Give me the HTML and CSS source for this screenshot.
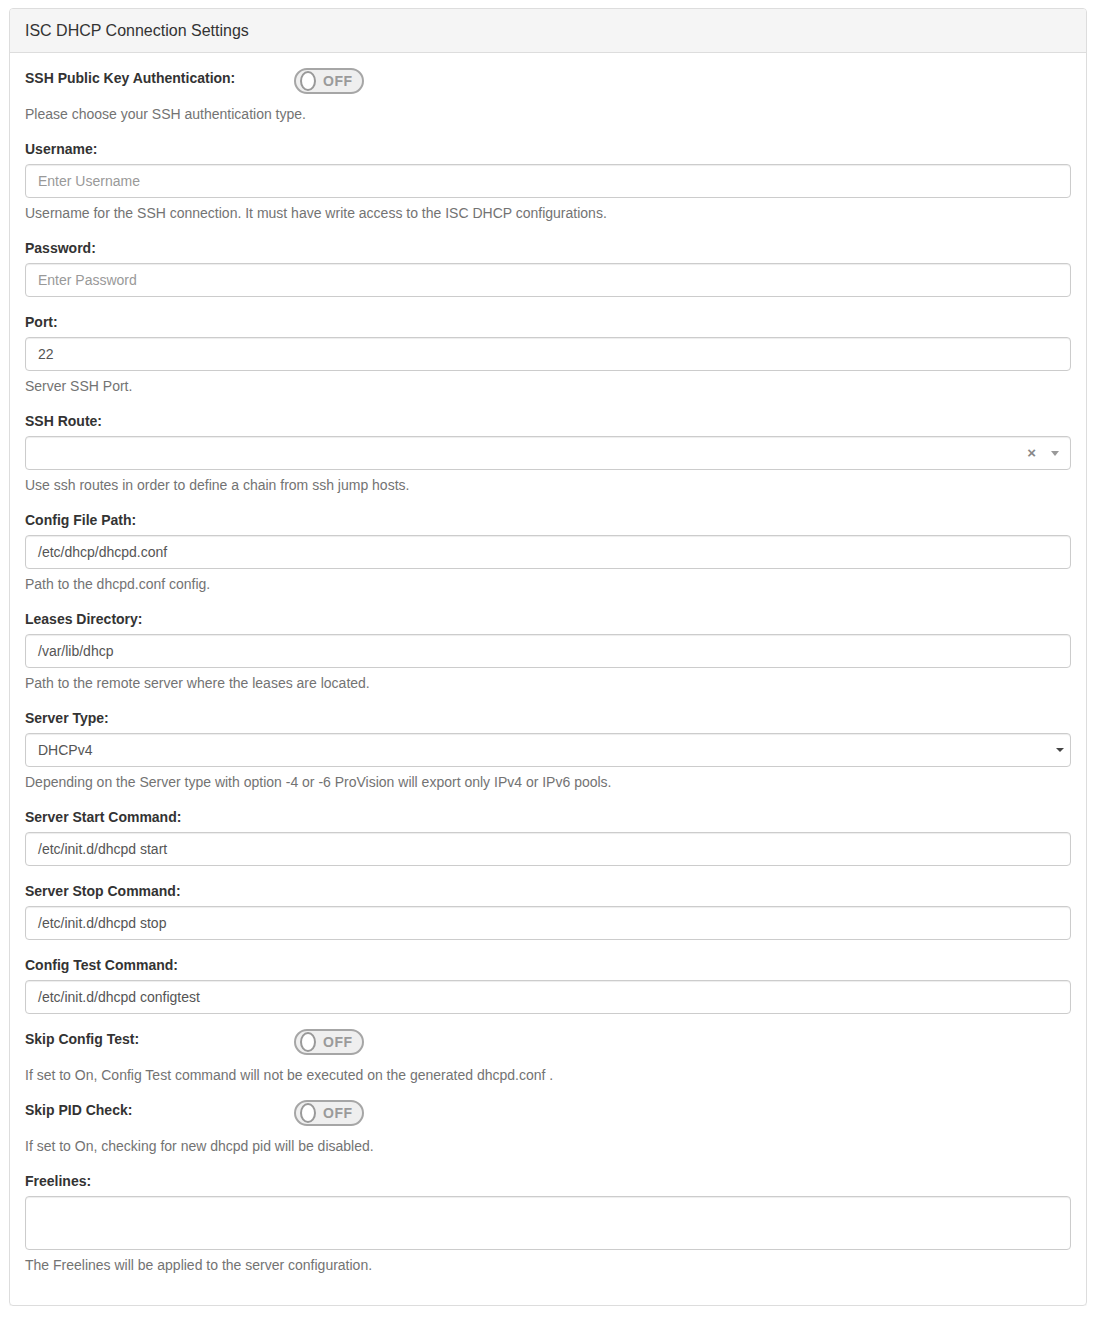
FILE: index.html
```html
<!DOCTYPE html>
<html lang="en">
<head>
	<meta charset="UTF-8">
	<title>ISC DHCP Connection Settings</title>
	<link rel="stylesheet" href="styles.css">
</head>
<body>
	<div class="panel">
		<div class="panel_heading">ISC DHCP Connection Settings</div>
		<div class="panel_body">

			<div class="form_group">
				<div class="switch_row">
					<label class="switch_label">SSH Public Key Authentication:</label>
					<span class="switch"><span class="knob"></span><span class="switch_text">OFF</span></span>
				</div>
				<p class="help">Please choose your SSH authentication type.</p>
			</div>

			<div class="form_group">
				<label>Username:</label>
				<div class="control placeholder">Enter Username</div>
				<p class="help">Username for the SSH connection. It must have write access to the ISC DHCP configurations.</p>
			</div>

			<div class="form_group">
				<label>Password:</label>
				<div class="control placeholder">Enter Password</div>
			</div>

			<div class="form_group">
				<label>Port:</label>
				<div class="control">22</div>
				<p class="help">Server SSH Port.</p>
			</div>

			<div class="form_group">
				<label>SSH Route:</label>
				<div class="control select2">
					<span class="select2_value"></span>
					<span class="select2_clear">&times;</span>
					<span class="select2_arrow"></span>
				</div>
				<p class="help">Use ssh routes in order to define a chain from ssh jump hosts.</p>
			</div>

			<div class="form_group">
				<label>Config File Path:</label>
				<div class="control">/etc/dhcp/dhcpd.conf</div>
				<p class="help">Path to the dhcpd.conf config.</p>
			</div>

			<div class="form_group">
				<label>Leases Directory:</label>
				<div class="control">/var/lib/dhcp</div>
				<p class="help">Path to the remote server where the leases are located.</p>
			</div>

			<div class="form_group">
				<label>Server Type:</label>
				<div class="control select">
					<span>DHCPv4</span>
					<span class="select_arrow"></span>
				</div>
				<p class="help">Depending on the Server type with option -4 or -6 ProVision will export only IPv4 or IPv6 pools.</p>
			</div>

			<div class="form_group">
				<label>Server Start Command:</label>
				<div class="control">/etc/init.d/dhcpd start</div>
			</div>

			<div class="form_group">
				<label>Server Stop Command:</label>
				<div class="control">/etc/init.d/dhcpd stop</div>
			</div>

			<div class="form_group">
				<label>Config Test Command:</label>
				<div class="control">/etc/init.d/dhcpd configtest</div>
			</div>

			<div class="form_group">
				<div class="switch_row">
					<label class="switch_label">Skip Config Test:</label>
					<span class="switch"><span class="knob"></span><span class="switch_text">OFF</span></span>
				</div>
				<p class="help">If set to On, Config Test command will not be executed on the generated dhcpd.conf .</p>
			</div>

			<div class="form_group">
				<div class="switch_row">
					<label class="switch_label">Skip PID Check:</label>
					<span class="switch"><span class="knob"></span><span class="switch_text">OFF</span></span>
				</div>
				<p class="help">If set to On, checking for new dhcpd pid will be disabled.</p>
			</div>

			<div class="form_group">
				<label>Freelines:</label>
				<div class="control textarea"></div>
				<p class="help">The Freelines will be applied to the server configuration.</p>
			</div>

		</div>
	</div>
</body>
</html>
```

FILE: styles.css
```css
* {
	margin: 0;
	padding: 0;
	box-sizing: border-box;
}

body {
	margin: 8px 8px 8px 9px;
	font-family: 'Liberation Sans', Arial, sans-serif;
	font-size: 14px;
	line-height: 20px;
	color: #333;
	background-color: #fff;
}

.panel {
	border: 1px solid #ddd;
	border-radius: 4px;
	box-shadow: 0 1px 1px rgba(0, 0, 0, 0.05);
}

.panel_heading {
	padding: 12px 15px;
	height: 44px;
	font-size: 16px;
	line-height: 19px;
	color: #333;
	background-color: #f5f5f5;
	border-bottom: 1px solid #ddd;
	border-radius: 3px 3px 0 0;
}

.panel_body {
	padding: 15px;
}

.form_group {
	margin-bottom: 15px;
}

label {
	display: block;
	font-weight: bold;
	margin-bottom: 5px;
	line-height: 20px;
}

.control {
	height: 34px;
	padding: 6px 12px;
	border: 1px solid #ccc;
	border-radius: 4px;
	color: #555;
	line-height: 20px;
	box-shadow: inset 0 1px 1px rgba(0, 0, 0, 0.075);
}

.placeholder {
	color: #999;
}

.textarea {
	height: 54px;
}

.help {
	margin-top: 5px;
	color: #737373;
	line-height: 20px;
}

/* 开关 */
.switch_row {
	display: flex;
	align-items: flex-start;
	height: 26px;
	margin-bottom: 10px;
}

.switch_label {
	width: 269px;
	margin-bottom: 0;
}

.switch {
	display: flex;
	align-items: center;
	width: 70px;
	height: 26px;
	border: 2px solid #a6a6a6;
	border-radius: 13px;
	background-color: #efefef;
	padding-left: 4px;
}

.knob {
	width: 16px;
	height: 20px;
	border: 2px solid #999;
	border-radius: 50%;
	background-color: #fff;
}

.switch_text {
	margin-left: 7px;
	font-size: 14px;
	font-weight: bold;
	color: #9a9a9a;
	letter-spacing: 0.5px;
}

/* 下拉框 */
.select2, .select {
	display: flex;
	align-items: center;
}

.select2_value, .select span:first-child {
	flex: 1;
}

.select2_clear {
	color: #888;
	font-size: 15px;
	font-weight: bold;
	margin-right: 15px;
}

.select2_arrow {
	width: 0;
	height: 0;
	border-left: 4px solid transparent;
	border-right: 4px solid transparent;
	border-top: 5px solid #999;
	margin-right: -1px;
}

.select_arrow {
	width: 0;
	height: 0;
	border-left: 4px solid transparent;
	border-right: 4px solid transparent;
	border-top: 4px solid #444;
	margin-right: -6px;
}
```
